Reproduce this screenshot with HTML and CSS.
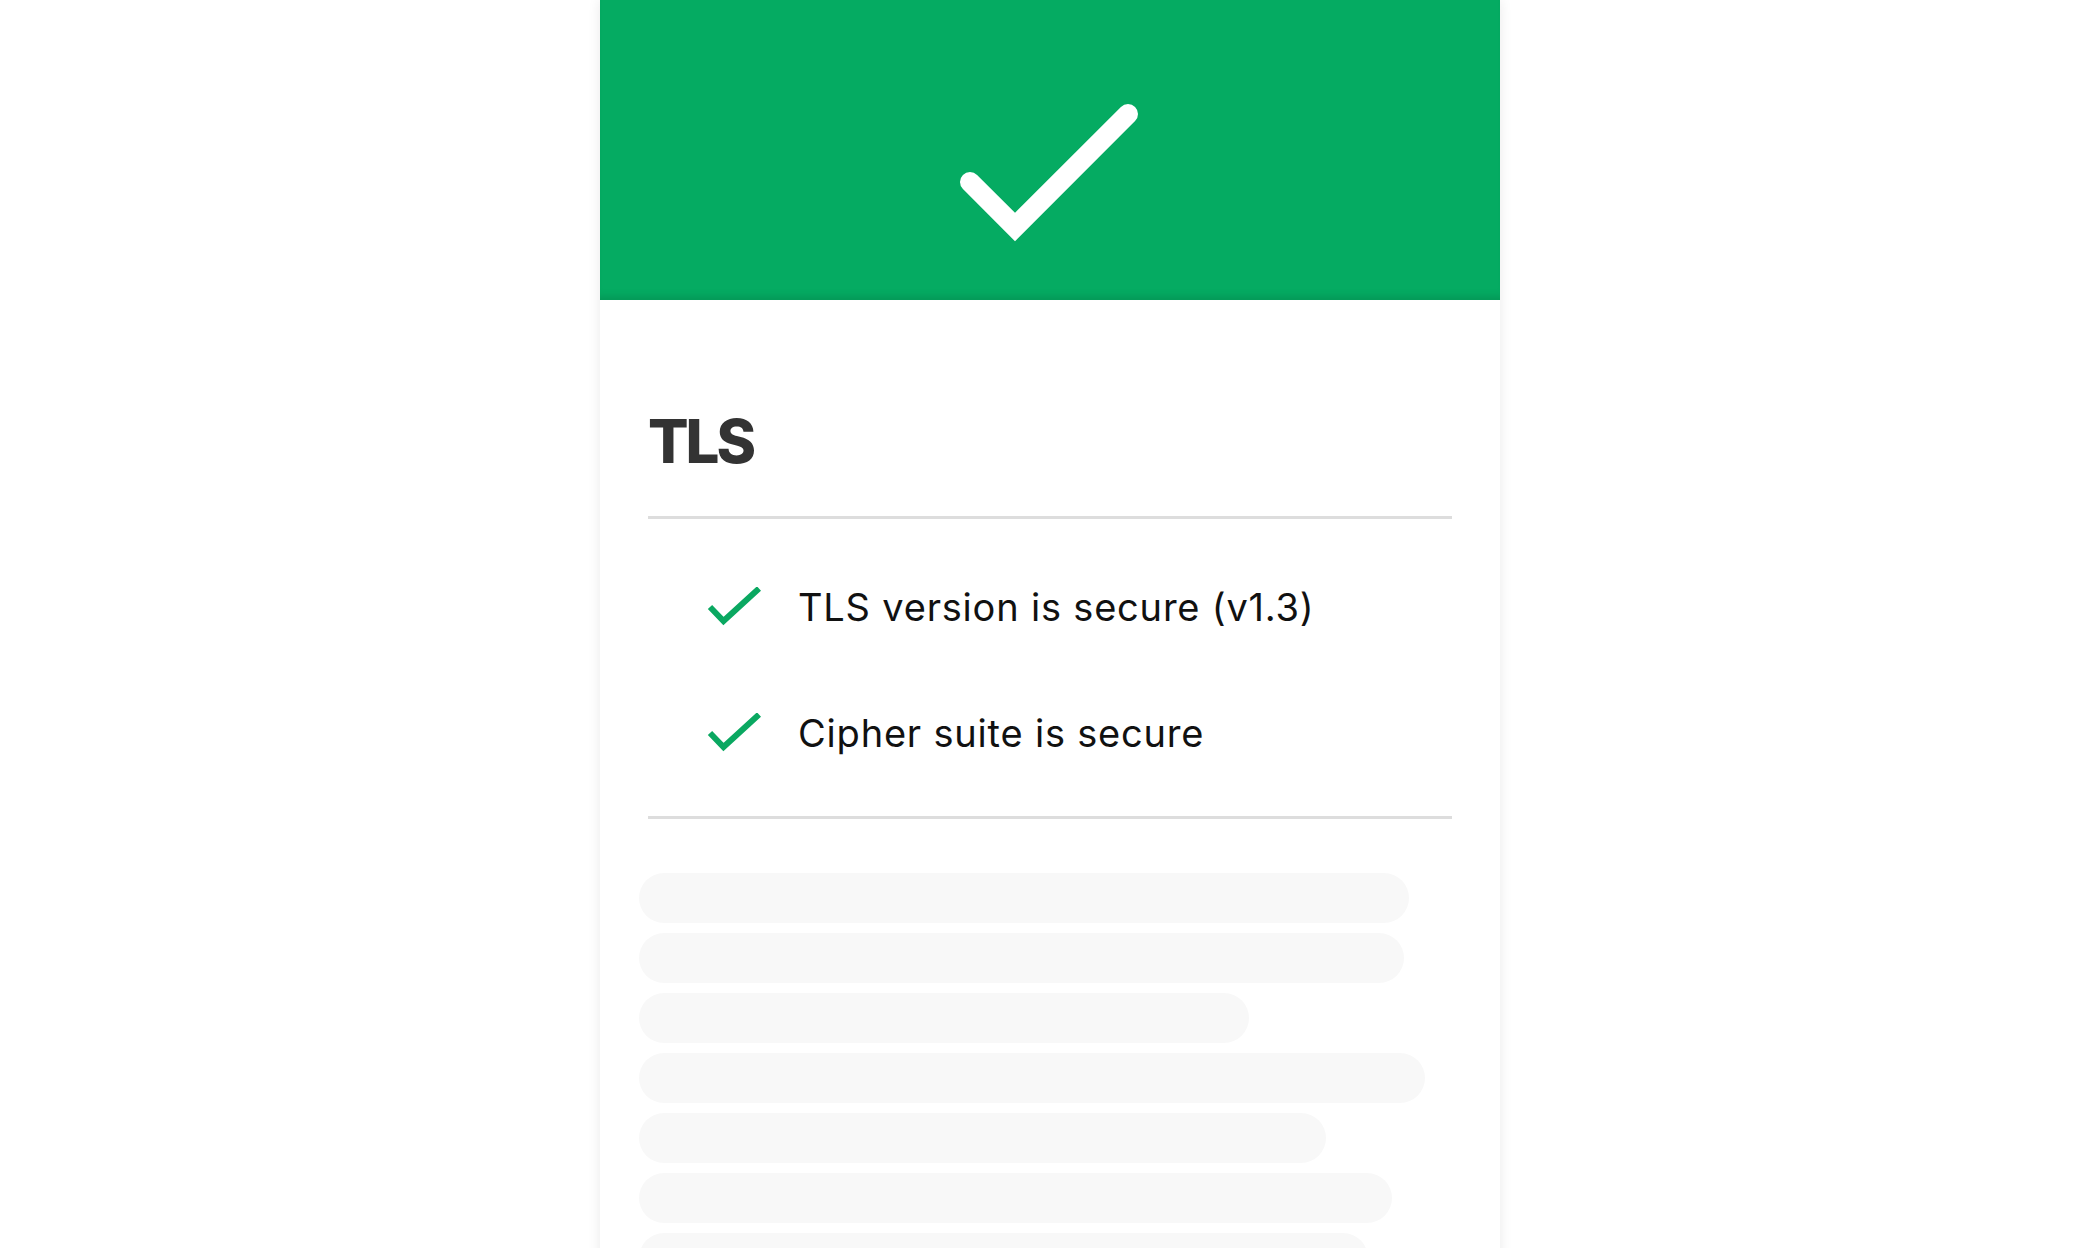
FILE: index.html
```html
<!DOCTYPE html>
<html lang="en">
<head>
  <meta charset="utf-8" />
  <title>TLS check</title>
  <meta name="viewport" content="width=device-width, initial-scale=1.0" />
  <link rel="stylesheet" href="styles.css">
</head>
<body>
  <div class="card">
    <header class="card-head">
      <svg class="big-check" width="190" height="150" viewBox="0 0 190 150">
        <path d="M15 87 L60 132 L173 19" />
      </svg>
    </header>

    <main class="card-body">
      <h1 class="title">TLS</h1>

      <ul class="checks">
        <li>
          <svg class="tick" width="54" height="40" viewBox="0 0 54 40"><path d="M3 20 L16.5 34 L52 1.5" /></svg>
          <span>TLS version is secure (v1.3)</span>
        </li>
        <li>
          <svg class="tick" width="54" height="40" viewBox="0 0 54 40"><path d="M3 20 L16.5 34 L52 1.5" /></svg>
          <span>Cipher suite is secure</span>
        </li>
      </ul>

      <!-- placeholder lines while the rest loads -->
      <div class="skeleton">
        <div class="line" style="width: 770px"></div>
        <div class="line" style="width: 765px"></div>
        <div class="line" style="width: 610px"></div>
        <div class="line" style="width: 786px"></div>
        <div class="line" style="width: 687px"></div>
        <div class="line" style="width: 753px"></div>
        <div class="line" style="width: 729px"></div>
      </div>
    </main>
  </div>
</body>
</html>
```

FILE: styles.css
```css
body {
  margin: 0;
  background: #fff;
  font-family: 'Inter', 'Open Sans', sans-serif;
  color: #111;
}

.card {
  width: 900px;
  margin: 0 auto;
  background: #fff;
  box-shadow: 0 0 12px rgba(0, 0, 0, 0.09);
}

.card-head {
  height: 300px;
  box-sizing: border-box;
  padding-top: 95px;
  display: flex;
  justify-content: center;
  align-items: flex-start;
  background: #05ab62;
  box-shadow: inset 0 -9px 8px -6px rgba(0, 0, 0, 0.13);
}

.big-check path {
  fill: none;
  stroke: #fff;
  stroke-width: 20;
  stroke-linecap: round;
  stroke-linejoin: miter;
}

.card-body {
  padding: 111px 48px 40px;
}

.title {
  margin: 0;
  font-size: 60px;
  line-height: 60px;
  font-weight: 800;
  color: #333;
  letter-spacing: -3px;
}

.checks {
  list-style: none;
  margin: 45px 0 0;
  padding: 25px 0 20px 59px;
  border-top: 3px solid #ddd;
  border-bottom: 3px solid #ddd;
}

.checks li {
  height: 126px;
  display: flex;
  align-items: center;
  gap: 37px;
  font-size: 38px;
  letter-spacing: 0.8px;
}

.tick path {
  fill: none;
  stroke: #0aa861;
  stroke-width: 6;
}

.skeleton {
  margin: 54px -9px 0;
  display: flex;
  flex-direction: column;
  gap: 10px;
}

.line {
  height: 50px;
  border-radius: 25px;
  background: #f8f8f8;
}
```
